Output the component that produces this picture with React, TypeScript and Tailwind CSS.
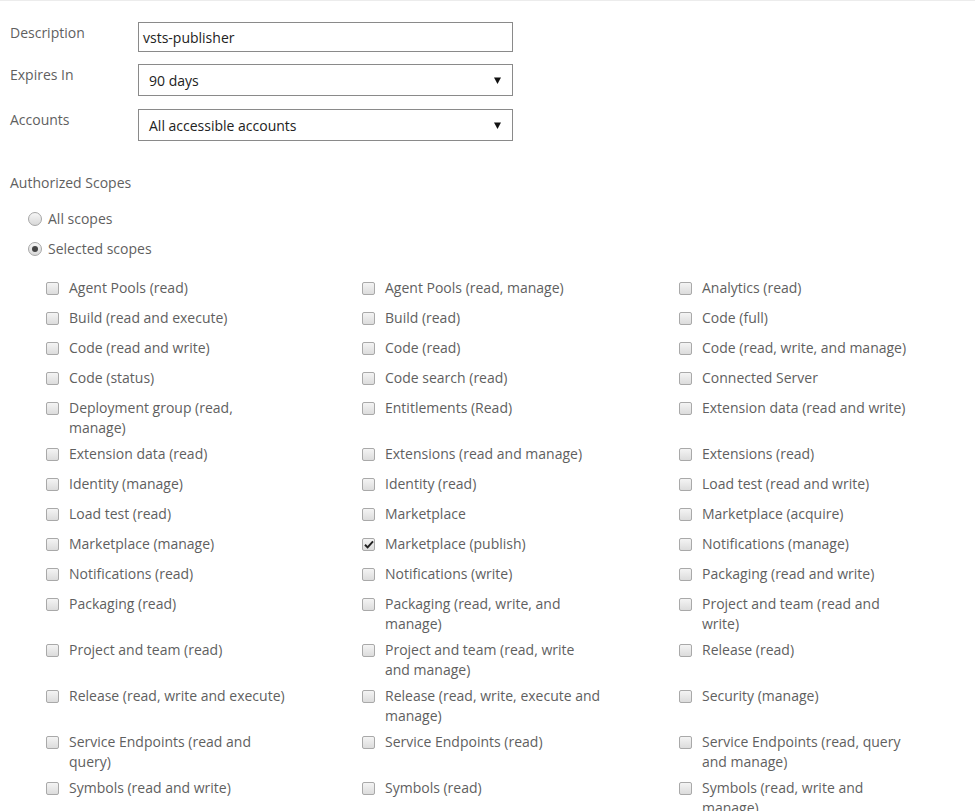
import React from "react";

const scopes: { t: string; checked?: boolean }[][] = [
  [{ t: "Agent Pools (read)" }, { t: "Agent Pools (read, manage)" }, { t: "Analytics (read)" }],
  [{ t: "Build (read and execute)" }, { t: "Build (read)" }, { t: "Code (full)" }],
  [{ t: "Code (read and write)" }, { t: "Code (read)" }, { t: "Code (read, write, and manage)" }],
  [{ t: "Code (status)" }, { t: "Code search (read)" }, { t: "Connected Server" }],
  [{ t: "Deployment group (read,\nmanage)" }, { t: "Entitlements (Read)" }, { t: "Extension data (read and write)" }],
  [{ t: "Extension data (read)" }, { t: "Extensions (read and manage)" }, { t: "Extensions (read)" }],
  [{ t: "Identity (manage)" }, { t: "Identity (read)" }, { t: "Load test (read and write)" }],
  [{ t: "Load test (read)" }, { t: "Marketplace" }, { t: "Marketplace (acquire)" }],
  [{ t: "Marketplace (manage)" }, { t: "Marketplace (publish)", checked: true }, { t: "Notifications (manage)" }],
  [{ t: "Notifications (read)" }, { t: "Notifications (write)" }, { t: "Packaging (read and write)" }],
  [{ t: "Packaging (read)" }, { t: "Packaging (read, write, and\nmanage)" }, { t: "Project and team (read and\nwrite)" }],
  [{ t: "Project and team (read)" }, { t: "Project and team (read, write\nand manage)" }, { t: "Release (read)" }],
  [{ t: "Release (read, write and execute)" }, { t: "Release (read, write, execute and\nmanage)" }, { t: "Security (manage)" }],
  [{ t: "Service Endpoints (read and\nquery)" }, { t: "Service Endpoints (read)" }, { t: "Service Endpoints (read, query\nand manage)" }],
  [{ t: "Symbols (read and write)" }, { t: "Symbols (read)" }, { t: "Symbols (read, write and\nmanage)" }],
];

function Checkbox({ checked }: { checked?: boolean }) {
  return (
    <span className="mt-[4px] flex h-[13px] w-[13px] shrink-0 items-center justify-center rounded-[2px] border border-[#a9a9a9] bg-gradient-to-b from-[#f4f4f4] to-[#dcdcdc]">
      {checked && (
        <svg width="10" height="9" viewBox="0 0 10 9">
          <path d="M1 4.8 L3.6 7.4 L9 1.4" fill="none" stroke="#222" strokeWidth="2" />
        </svg>
      )}
    </span>
  );
}

function Radio({ checked }: { checked?: boolean }) {
  return (
    <span className="flex h-[14px] w-[14px] shrink-0 items-center justify-center rounded-full border border-[#a6a6a6] bg-gradient-to-b from-[#f6f6f6] to-[#d8d8d8]">
      {checked && <span className="h-[6px] w-[6px] rounded-full bg-[#444]" />}
    </span>
  );
}

function Arrow() {
  return (
    <svg width="7" height="7" viewBox="0 0 7 7" className="ml-auto">
      <path d="M0 0.5 L7 0.5 L3.5 7 Z" fill="#111" />
    </svg>
  );
}

export default function App() {
  return (
    <div
      className="h-[811px] w-[975px] overflow-hidden border-t border-[#ececec] bg-white text-[14px] leading-[20px] text-[#5f5f5f]"
      style={{ fontFamily: '"Open Sans", "Noto Sans", Arial, sans-serif' }}
    >
      <div className="pl-[10px] pt-[21px]">
        <div className="flex">
          <div className="w-[128px] pt-[1px]">Description</div>
          <div className="flex h-[30px] w-[375px] items-center border border-[#8a8a8a] px-[4px] pt-[1px] text-[#222]">
            vsts-publisher
          </div>
        </div>
        <div className="mt-[12px] flex">
          <div className="w-[128px] pt-[1px]">Expires In</div>
          <div className="flex h-[32px] w-[375px] items-center border border-[#8a8a8a] pl-[10px] pr-[11px] pt-[1px] text-[#222]">
            90 days
            <Arrow />
          </div>
        </div>
        <div className="mt-[13px] flex">
          <div className="w-[128px] pt-[1px]">Accounts</div>
          <div className="flex h-[32px] w-[375px] items-center border border-[#8a8a8a] pl-[10px] pr-[11px] pt-[1px] text-[#222]">
            All accessible accounts
            <Arrow />
          </div>
        </div>
        <div className="mt-[32px]">Authorized Scopes</div>
        <div className="ml-[18px] mt-[16px] flex flex-col gap-[10px]">
          <label className="flex items-center gap-[6px]">
            <Radio />
            <span>All scopes</span>
          </label>
          <label className="flex items-center gap-[6px]">
            <Radio checked />
            <span>Selected scopes</span>
          </label>
        </div>
      </div>
      <div className="ml-[46px] mt-[16px] grid grid-cols-[316px_317px_260px]">
        {scopes.flat().map((s, i) => (
          <div key={i} className="flex min-h-[30px] gap-[10px] py-[3px]">
            <Checkbox checked={s.checked} />
            <span className="whitespace-pre">{s.t}</span>
          </div>
        ))}
      </div>
    </div>
  );
}
